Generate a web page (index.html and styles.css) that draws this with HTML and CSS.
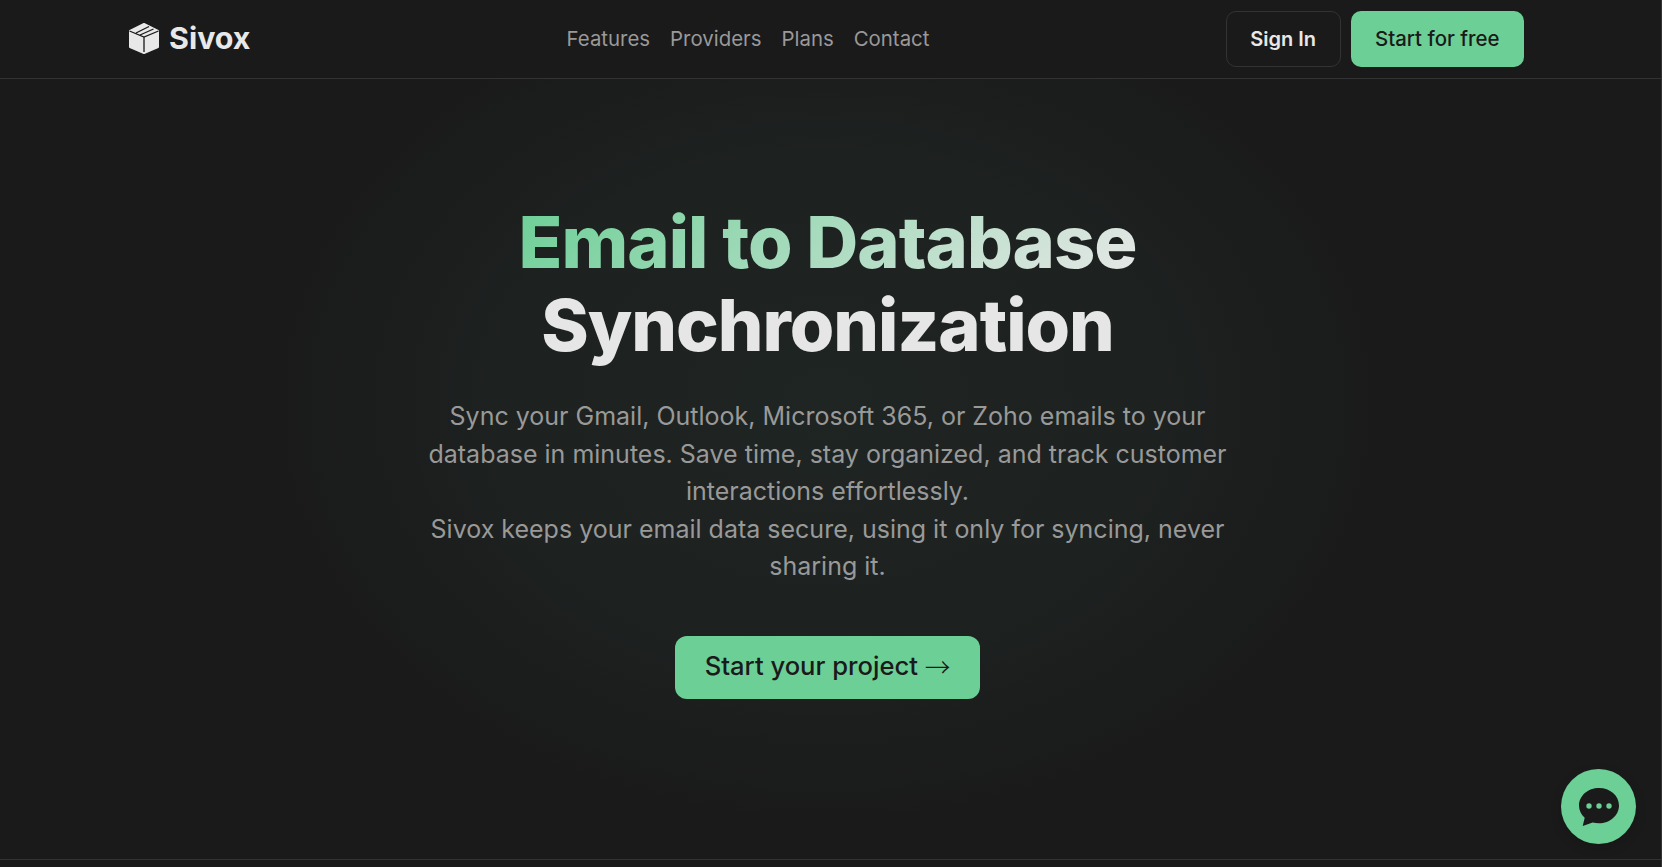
FILE: index.html
```html
<!DOCTYPE html>
<html>
<head>
    <title>Sivox</title>
    <link rel="stylesheet" href="styles.css">
</head>
<body>
    <div class="page">
        <div class="header">
            <div class="header-inner">
                <a class="logo" href="#">
                    <svg class="logo-icon" viewBox="0 0 32 32">
                        <path d="M16 2 30 9v16l-14 6-14-6V9Z" fill="#e8e8e8" stroke="#e8e8e8" stroke-width="2" stroke-linejoin="round"/>
                        <path d="M1.500 9 16 15 30.500 9M16 15v15M8 11 21 4.500M12 13 25.500 7" stroke="#1a1a1a" stroke-width="1.300" fill="none"/>
                    </svg>
                    <span>Sivox</span>
                </a>
                <div class="nav">
                    <a href="#">Features</a>
                    <a href="#">Providers</a>
                    <a href="#">Plans</a>
                    <a href="#">Contact</a>
                </div>
                <div class="actions">
                    <a class="btn btn-outline" href="#">Sign In</a>
                    <a class="btn btn-green" href="#">Start for free</a>
                </div>
            </div>
        </div>

        <div class="hero">
            <h1><span class="hero-accent">Email to Database</span><br>Synchronization</h1>
            <p>Sync your Gmail, Outlook, Microsoft 365, or Zoho emails to your database in minutes. Save time, stay organized, and track customer interactions effortlessly.<br>Sivox keeps your email data secure, using it only for syncing, never sharing it.</p>
            <a class="btn btn-green btn-large" href="#">Start your project <span class="arrow">→</span></a>
        </div>
    </div>

    <a class="chat-button" href="#">
        <svg viewBox="0 0 40 40">
            <path d="M20 1C9 1 0 8.800 0 18.500c0 4.800 2.200 9.100 5.700 12.300L3.700 39l10-3.400c2 .5 4 .7 6.300.7 11 0 20-7.900 20-17.800S31 1 20 1Z" fill="#1a1a1a"/>
            <circle cx="10" cy="19" r="2.700" fill="#6ccf96"/>
            <circle cx="20" cy="19" r="2.700" fill="#6ccf96"/>
            <circle cx="30" cy="19" r="2.700" fill="#6ccf96"/>
        </svg>
    </a>
</body>
</html>
```

FILE: styles.css
```css
* {
    box-sizing: border-box;
}
html, body {
    margin: 0;
    padding: 0;
    height: 100%;
    overflow: hidden;
}
body {
    background: #1a1a1a;
    color: #e8e8e8;
    font-family: Inter, Arial, sans-serif;
    border-right: 1px solid #333;
}
a {
    text-decoration: none;
    color: inherit;
}
.page {
    height: 860px;
    border-bottom: 1px solid #333;
    background: radial-gradient(ellipse 560px 420px at 827px 47%, #1f2523 0%, #1d2120 60%, #1a1a1a 100%);
}
.header {
    height: 79px;
    background: #1a1a1a;
    border-bottom: 1px solid #333;
}
.header-inner {
    display: grid;
    grid-template-columns: 1fr auto 1fr;
    align-items: center;
    height: 78px;
    padding: 0 137px 0 128px;
}
.logo {
    display: flex;
    align-items: center;
    gap: 9px;
    padding-bottom: 2px;
    font-size: 30.400px;
    font-weight: 700;
}
.logo-icon {
    width: 32px;
    height: 32px;
}
.nav {
    display: flex;
    gap: 20px;
    margin-left: -156px;
    padding-bottom: 1px;
    font-size: 20.400px;
    font-weight: 400;
    color: #999;
}
.actions {
    display: flex;
    justify-content: flex-end;
    gap: 10px;
}
.btn {
    display: inline-block;
    border-radius: 10px;
    font-weight: 500;
    font-size: 20.400px;
    line-height: 56px;
    height: 56px;
    padding: 0 24.500px;
}
.btn-outline {
    border: 1px solid #333;
    font-size: 20px;
    font-weight: 600;
    line-height: 54px;
    padding: 0 23.500px;
}
.btn-green {
    background: #6ccf96;
    color: #1a1a1a;
}
.hero {
    display: flex;
    flex-direction: column;
    align-items: center;
    padding: 121px 6px 0 0;
    text-align: center;
}
.hero h1 {
    margin: 0;
    font-size: 72px;
    font-weight: 800;
    line-height: 83px;
    letter-spacing: -1px;
    color: #e6e6e6;
}
.hero-accent {
    background: linear-gradient(135deg, #6ccf96, #e8e8e8);
    -webkit-background-clip: text;
    background-clip: text;
    color: transparent;
}
.hero p {
    width: 800px;
    margin: 32px 0 0;
    font-size: 25px;
    line-height: 37.500px;
    color: #999;
}
.btn-large {
    margin-top: 50px;
    height: 63px;
    line-height: 59px;
    padding: 0 30px;
    font-size: 25.600px;
    font-weight: 500;
    border-radius: 12px;
}
.arrow {
    font-family: "Noto Sans CJK SC", sans-serif;
    font-weight: 300;
    vertical-align: -2px;
}
.chat-button {
    position: fixed;
    right: 26px;
    bottom: 23px;
    display: flex;
    align-items: center;
    justify-content: center;
    width: 75px;
    height: 75px;
    border-radius: 50%;
    background: #6ccf96;
    box-shadow: 0 4px 12px rgba(0, 0, 0, 0.15);
}
.chat-button svg {
    width: 40px;
    height: 40px;
}
```
